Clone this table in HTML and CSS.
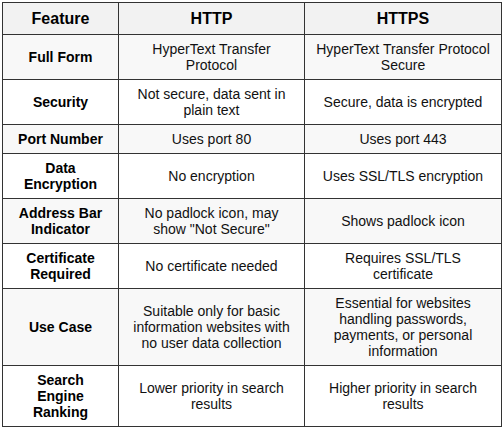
FILE: index.html
```html
<!DOCTYPE html>
<html>
<head>
<meta charset="utf-8">
<link rel="stylesheet" href="styles.css">
</head>
<body>
<div class="wrap">
<table class="cmp">
<colgroup><col class="c1"><col class="c2"><col class="c3"></colgroup>
<thead>
<tr><th>Feature</th><th>HTTP</th><th>HTTPS</th></tr>
</thead>
<tbody>
<tr><td class="feat">Full Form</td><td>HyperText Transfer Protocol</td><td>HyperText Transfer Protocol Secure</td></tr>
<tr><td class="feat">Security</td><td>Not secure, data sent in plain text</td><td>Secure, data is encrypted</td></tr>
<tr><td class="feat">Port Number</td><td>Uses port 80</td><td>Uses port 443</td></tr>
<tr><td class="feat">Data Encryption</td><td>No encryption</td><td>Uses SSL/TLS encryption</td></tr>
<tr><td class="feat">Address Bar Indicator</td><td>No padlock icon, may show "Not Secure"</td><td>Shows padlock icon</td></tr>
<tr><td class="feat">Certificate Required</td><td>No certificate needed</td><td>Requires SSL/TLS certificate</td></tr>
<tr><td class="feat">Use Case</td><td>Suitable only for basic information websites with no user data collection</td><td>Essential for websites handling passwords, payments, or personal information</td></tr>
<tr><td class="feat">Search Engine Ranking</td><td>Lower priority in search results</td><td>Higher priority in search results</td></tr>
</tbody>
</table>
</div>
</body>
</html>
```
FILE: styles.css
```css
html, body {
  margin: 0;
  padding: 0;
  background: #ffffff;
}
.wrap {
  padding: 2px;
}
.cmp {
  border-collapse: collapse;
  table-layout: fixed;
  width: 499px;
  font-family: "Liberation Sans", Arial, sans-serif;
  font-size: 14px;
  line-height: 16px;
  color: #111;
}
.c1 { width: 116px; }
.c2 { width: 186px; }
.c3 { width: 197px; }
.cmp th, .cmp td {
  border: 1px solid #333;
  text-align: center;
  vertical-align: middle;
  padding: 6px 10px;
}
.cmp th {
  background: #f2f2f2;
  font-weight: bold;
  font-size: 16px;
  line-height: 17px;
  padding: 7px 10px;
  color: #000;
}
.cmp tbody tr:nth-child(odd) td {
  background: #f8f8f8;
}
.cmp td.feat {
  font-weight: bold;
  color: #000;
}
```
